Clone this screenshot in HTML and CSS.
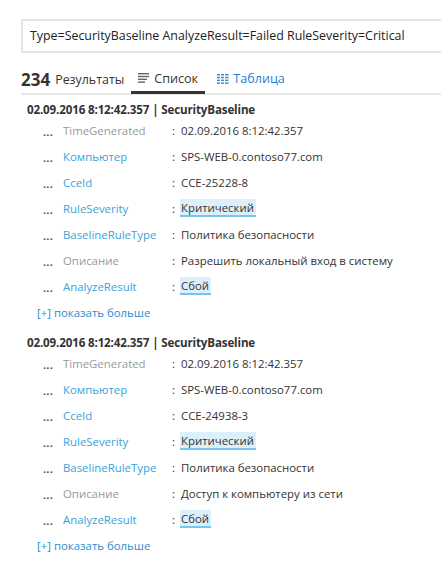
FILE: index.html
```html
<!DOCTYPE html>
<html>
<head>
<meta charset="utf-8">
<link rel="stylesheet" href="styles.css">
</head>
<body>
<div class="search">Type=SecurityBaseline AnalyzeResult=Failed RuleSeverity=Critical</div>
<div class="tabs">
  <span class="count">234</span><span class="results">Результаты</span>
  <span class="tab active">
    <svg width="12" height="10" viewBox="0 0 12 10"><rect x="0" y="0" width="11" height="1.4" fill="#666"/><rect x="0" y="2.8" width="11" height="1.4" fill="#666"/><rect x="0" y="5.6" width="9" height="1.4" fill="#666"/><rect x="0" y="8.4" width="7" height="1.4" fill="#666"/></svg>Список
  </span>
  <span class="tab blue">
    <svg width="12" height="10" viewBox="0 0 12 10" fill="#3a8fdc"><rect x="0" y="0" width="3" height="1.5"/><rect x="4" y="0" width="3" height="1.5"/><rect x="8" y="0" width="3.5" height="1.5"/><rect x="0" y="2.8" width="3" height="1.5"/><rect x="4" y="2.8" width="3" height="1.5"/><rect x="8" y="2.8" width="3.5" height="1.5"/><rect x="0" y="5.6" width="3" height="1.5"/><rect x="4" y="5.6" width="3" height="1.5"/><rect x="8" y="5.6" width="3.5" height="1.5"/><rect x="0" y="8.4" width="3" height="1.5"/><rect x="4" y="8.4" width="3" height="1.5"/><rect x="8" y="8.4" width="3.5" height="1.5"/></svg>Таблица
  </span>
</div>

<div class="record">
  <div class="rhead">02.09.2016 8:12:42.357 | SecurityBaseline</div>
  <div class="row"><span class="dots">...</span><span class="label grey">TimeGenerated</span><span class="colon">:</span><span class="val">02.09.2016 8:12:42.357</span></div>
  <div class="row"><span class="dots">...</span><span class="label">Компьютер</span><span class="colon">:</span><span class="val">SPS-WEB-0.contoso77.com</span></div>
  <div class="row"><span class="dots">...</span><span class="label">CceId</span><span class="colon">:</span><span class="val">CCE-25228-8</span></div>
  <div class="row"><span class="dots">...</span><span class="label">RuleSeverity</span><span class="colon">:</span><span class="val hl">Критический</span></div>
  <div class="row"><span class="dots">...</span><span class="label">BaselineRuleType</span><span class="colon">:</span><span class="val">Политика безопасности</span></div>
  <div class="row"><span class="dots">...</span><span class="label grey">Описание</span><span class="colon">:</span><span class="val">Разрешить локальный вход в систему</span></div>
  <div class="row"><span class="dots">...</span><span class="label">AnalyzeResult</span><span class="colon">:</span><span class="val hl">Сбой</span></div>
  <div class="more">[+] показать больше</div>
</div>

<div class="record">
  <div class="rhead">02.09.2016 8:12:42.357 | SecurityBaseline</div>
  <div class="row"><span class="dots">...</span><span class="label grey">TimeGenerated</span><span class="colon">:</span><span class="val">02.09.2016 8:12:42.357</span></div>
  <div class="row"><span class="dots">...</span><span class="label">Компьютер</span><span class="colon">:</span><span class="val">SPS-WEB-0.contoso77.com</span></div>
  <div class="row"><span class="dots">...</span><span class="label">CceId</span><span class="colon">:</span><span class="val">CCE-24938-3</span></div>
  <div class="row"><span class="dots">...</span><span class="label">RuleSeverity</span><span class="colon">:</span><span class="val hl">Критический</span></div>
  <div class="row"><span class="dots">...</span><span class="label">BaselineRuleType</span><span class="colon">:</span><span class="val">Политика безопасности</span></div>
  <div class="row"><span class="dots">...</span><span class="label grey">Описание</span><span class="colon">:</span><span class="val">Доступ к компьютеру из сети</span></div>
  <div class="row"><span class="dots">...</span><span class="label">AnalyzeResult</span><span class="colon">:</span><span class="val hl">Сбой</span></div>
  <div class="more">[+] показать больше</div>
</div>
</body>
</html>
```
FILE: styles.css
```css
html, body {
  margin: 0;
  padding: 0;
  background: #fff;
}
body {
  font-family: "Open Sans", "Noto Sans", sans-serif;
  font-size: 11.4px;
  color: #333;
  overflow: hidden;
  width: 441px;
  height: 563px;
}
.search {
  margin: 19px 0 0 21px;
  height: 30px;
  border: 2px solid #e6e6e6;
  border-right: none;
  padding-left: 7px;
  line-height: 30px;
  font-size: 12.4px;
  color: #222;
  white-space: nowrap;
}
.tabs {
  margin: 10px 0 0 21px;
  height: 30px;
  border-bottom: 2px solid #e8e8e8;
  display: flex;
  align-items: center;
  white-space: nowrap;
}
.count {
  font-size: 17px;
  font-weight: 700;
  color: #333;
  margin-right: 5px;
  position: relative;
  top: 1px;
}
.results {
  font-size: 12.4px;
  color: #333;
  margin-right: 7px;
  position: relative;
  top: 1px;
}
.tab {
  height: 30px;
  display: flex;
  align-items: center;
  gap: 4px;
  font-size: 12.6px;
  padding: 0 6px 0 7px;
  box-sizing: border-box;
}
.tab.active {
  color: #333;
  border-bottom: 3px solid #333;
  margin-bottom: -2px;
  padding-top: 1px;
  width: 74px;
}
.tab.blue {
  color: #1f7fd1;
  margin-left: 5px;
  padding-top: 1px;
}
.record {
  margin-top: 8px;
  margin-bottom: 11px;
}
.rhead {
  margin-left: 27px;
  font-weight: 700;
  font-size: 11.6px;
  letter-spacing: -0.15px;
  line-height: 14px;
  color: #333;
  white-space: nowrap;
}
.row {
  height: 26px;
  display: flex;
  align-items: center;
  white-space: nowrap;
}
.dots {
  width: 20px;
  margin-left: 43px;
  font-weight: 700;
  color: #555;
  font-size: 11px;
  letter-spacing: 0.2px;
  position: relative;
  top: 1px;
}
.label {
  width: 109px;
  color: #37a3dc;
}
.label.grey {
  color: #999;
}
.colon {
  width: 9px;
  color: #333;
}
.val {
  color: #333;
  padding: 1px 2px 0 1px;
  margin-left: -1px;
}
.val.hl {
  background: #dcf0fb;
  border-bottom: 2px solid #73c6ef;
}
.more {
  margin: 2px 0 0 37px;
  line-height: 24px;
  color: #2a8dd4;
}
```
